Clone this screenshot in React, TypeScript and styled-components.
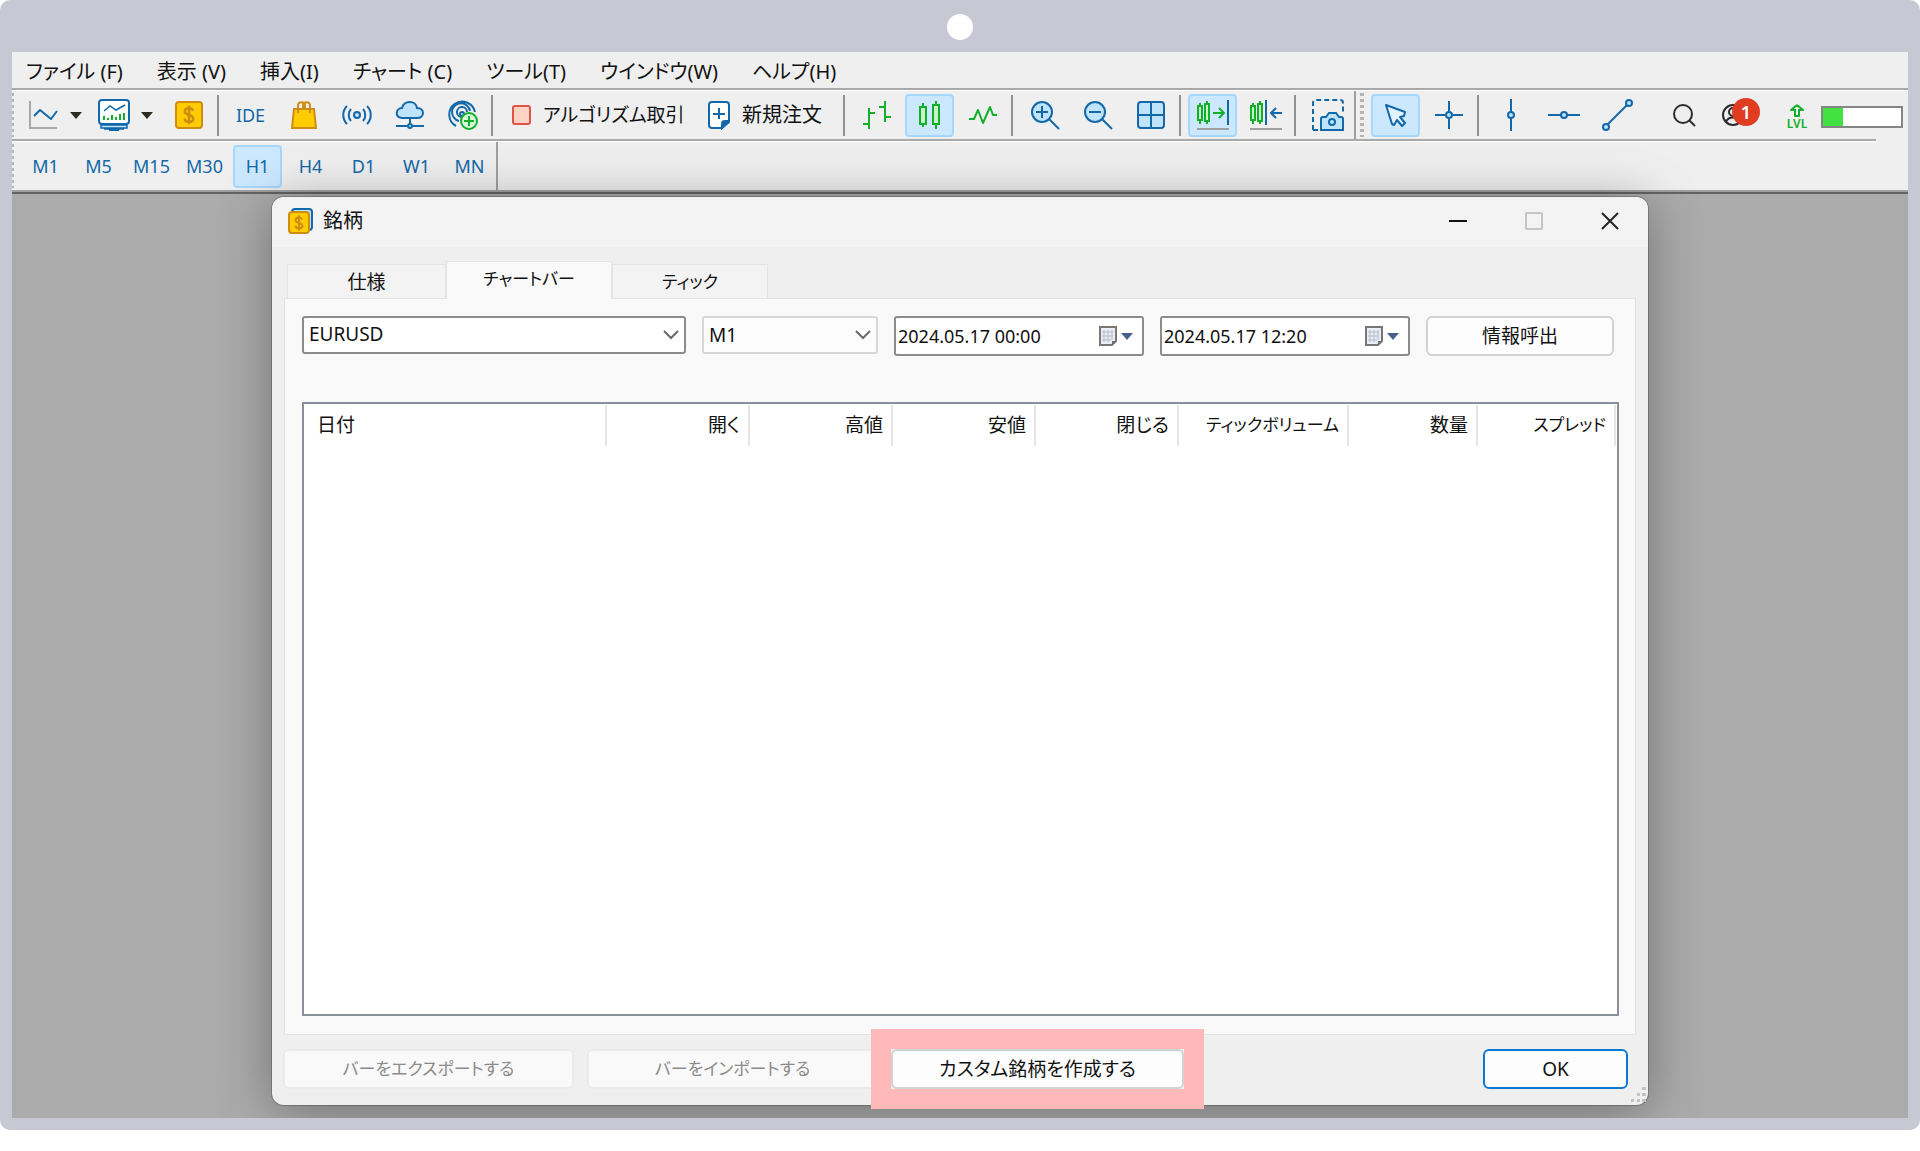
import React from 'react';
import styled, { createGlobalStyle, css } from 'styled-components';

const blue = '#1268a8';
const paleBlue = '#bfe3fb';
const green = '#12b02a';
const paleGreen = '#c9f5cb';
const gold = '#ffcc00';
const darkGold = '#cf8c12';

const GlobalStyle = createGlobalStyle`
  *, *::before, *::after { box-sizing: border-box; }
  body { margin: 0; background: #fff; }
  body, button, input, select, table {
    font-family: "Noto Sans", "Noto Sans CJK JP", sans-serif;
    font-size: 19px;
    line-height: 24px;
    color: #111;
    font-feature-settings: "palt";
  }
  button { padding: 0; border: 0; background: none; }
  svg { display: block; flex: none; }
`;

const Frame = styled.div`
  background: #c8c8d5;
  border-radius: 10px;
  padding: 0 12px 12px;
`;

const CameraBar = styled.div`
  height: 52px;
  padding-top: 14px;
  display: flex;
  justify-content: center;
  align-items: flex-start;
`;

const CameraDot = styled.span`
  width: 26px;
  height: 26px;
  border-radius: 50%;
  background: #fff;
`;

const Screen = styled.div`
  background: #efefef;
  overflow: hidden;
`;

const MenuBar = styled.nav`
  height: 36px;
  display: flex;
  align-items: center;
  gap: 34px;
  padding: 3px 0 0 14px;
`;

const MenuItem = styled.button`
  font-size: 20px;
  white-space: nowrap;
`;

const Divider = styled.div<{ $inset?: boolean }>`
  height: 3px;
  border-top: 2px solid #a9a9a9;
  background: #fff;
  margin-right: ${p => (p.$inset ? '32px' : '0')};
`;

const Toolbar = styled.div`
  height: 48px;
  display: flex;
  align-items: center;
  gap: 4px;
`;

const Grip = styled.span<{ $bold?: boolean }>`
  flex: none;
  width: ${p => (p.$bold ? '4px' : '2px')};
  height: 44px;
  background: repeating-linear-gradient(#b5b5b5 0 3px, transparent 3px 6px);
  margin-right: ${p => (p.$bold ? '3px' : '4px')};
`;

const Separator = styled.span`
  flex: none;
  width: 2px;
  height: 41px;
  background: #929292;
  margin-right: 3px;
`;

const EdgeSeparator = styled.span`
  flex: none;
  width: 2px;
  height: 48px;
  margin-left: -2px;
  background: #a0a0a0;
`;

const Tool = styled.button<{ $active?: boolean }>`
  flex: none;
  width: 49px;
  height: 43px;
  border-radius: 4px;
  display: flex;
  align-items: center;
  justify-content: center;
  font-size: 18px;
  color: ${blue};
  ${p => p.$active && css`
    background: #cce8ff;
    border: 2px solid #a6d8ff;
  `}
`;

const SplitTool = styled.button`
  flex: none;
  width: 67px;
  height: 43px;
  padding-left: 5px;
  display: flex;
  align-items: center;
  gap: 11px;
`;

const TextTool = styled.button<{ $width: number; $dense?: boolean }>`
  flex: none;
  width: ${p => p.$width}px;
  height: 43px;
  padding-left: 12px;
  display: flex;
  align-items: center;
  gap: 12px;
  font-size: ${p => (p.$dense ? '19px' : '20px')};
  white-space: nowrap;
`;

const StatusGroup = styled.div`
  margin-left: auto;
  padding-right: 5px;
  display: flex;
  align-items: center;
  gap: 26px;
`;

const AccountButton = styled.button`
  position: relative;
  width: 38px;
  height: 30px;
`;

const Badge = styled.span`
  position: absolute;
  right: 0;
  top: -2px;
  width: 28px;
  height: 28px;
  border-radius: 50%;
  background: #e03c22;
  color: #fff;
  font-size: 18px;
  line-height: 28px;
  font-weight: 600;
  text-align: center;
`;

const LevelGroup = styled.div`
  display: flex;
  align-items: center;
  gap: 13px;
  padding-top: 3px;
`;

const Level = styled.span`
  width: 22px;
  display: flex;
  flex-direction: column;
  align-items: center;
  font-size: 12px;
  line-height: 14px;
  color: ${green};
  font-weight: 600;
`;

const Meter = styled.div`
  width: 82px;
  height: 22px;
  border: 2px solid #858585;
  background: linear-gradient(90deg, #42e142 0 20px, #fff 20px);
`;

const Timeframes = styled(Toolbar)`
  padding-right: 10px;
`;

const TimeframeList = styled.div`
  display: flex;
  gap: 4px;
  margin-left: -1px;
`;

const WorkspaceEdge = styled.div`
  height: 4px;
  background: #636363;
  border-top: 2px solid #a0a0a0;
`;

const Workspace = styled.main`
  background: #ababab;
  padding: 3px 260px 13px;
`;

const Dialog = styled.section`
  position: relative;
  background: #efefef;
  border-radius: 12px;
  box-shadow: 0 0 0 1px rgba(0, 0, 0, 0.2), 0 6px 52px rgba(0, 0, 0, 0.34);
`;

const TitleBar = styled.header`
  height: 50px;
  padding: 0 0 2px 15px;
  display: flex;
  align-items: center;
  gap: 10px;
  background: #f3f3f3;
  border-radius: 12px 12px 0 0;
`;

const Title = styled.h1`
  margin: 0;
  font-size: 20px;
  line-height: 24px;
  font-weight: 400;
`;

const WindowButtons = styled.div`
  margin-left: auto;
  display: flex;
`;

const WindowButton = styled.button`
  width: 76px;
  height: 48px;
  display: flex;
  align-items: center;
  justify-content: center;
`;

const DialogBody = styled.div`
  padding: 14px 12px 0;
`;

const TabList = styled.div`
  height: 37px;
  padding-left: 3px;
  display: flex;
  align-items: flex-end;
`;

const Tab = styled.button<{ $width: number; $active?: boolean; $dense?: boolean }>`
  width: ${p => p.$width}px;
  height: 34px;
  font-size: ${p => (p.$dense ? '17px' : '19px')};
  border: 1px solid #e4e4e4;
  border-bottom: 0;
  background: #f3f3f3;
  ${p => p.$active && css`
    height: 38px;
    margin-bottom: -1px;
    padding-bottom: 4px;
    background: #f9f9f9;
    position: relative;
  `}
`;

const Panel = styled.div`
  background: #f9f9f9;
  border: 1px solid #e2e2e2;
  padding: 17px 16px 18px 17px;
`;

const Controls = styled.form`
  display: flex;
  align-items: flex-start;
  gap: 16px;
  height: 40px;
  margin-bottom: 46px;
`;

const SelectBox = styled.span<{ $width: number }>`
  width: ${p => p.$width}px;
  display: grid;
  align-items: center;

  > * { grid-area: 1 / 1; }
  > svg { justify-self: end; margin-right: 7px; pointer-events: none; }
`;

const Select = styled.select<{ $muted?: boolean }>`
  appearance: none;
  width: 100%;
  height: 38px;
  padding: 0 30px ${p => (p.$muted ? '0' : '2px')} 5px;
  border: 2px solid ${p => (p.$muted ? '#d6d6d6' : '#8c8c8c')};
  border-radius: 3px;
  background: ${p => (p.$muted ? '#fcfcfc' : '#fff')};
`;

const DateBox = styled.span`
  width: 250px;
  height: 40px;
  display: flex;
  align-items: center;
  border: 2px solid #8c8c8c;
  border-radius: 3px;
  background: #fff;
  padding-right: 9px;
`;

const DateInput = styled.input`
  flex: 1;
  min-width: 0;
  border: 0;
  padding: 0 0 0 2px;
  background: none;
  font-size: 18px;
  outline: 0;
`;

const CalendarButton = styled.button`
  display: flex;
  align-items: center;
  gap: 3px;
`;

const PushButton = styled.button<{ $width: number; $primary?: boolean; $dense?: boolean }>`
  width: ${p => p.$width}px;
  height: 40px;
  font-size: ${p => (p.$dense ? '17px' : '19px')};
  border: 2px solid ${p => (p.$primary ? '#0b78d4' : '#d2d2d2')};
  border-radius: 6px;
  background: #fdfdfd;
  white-space: nowrap;

  &:disabled {
    color: #8b8b8b;
    background: #f9f9f9;
    border-color: #eaeaea;
  }
`;

const TableBox = styled.div`
  height: 614px;
  border: 2px solid #8a9097;
  background: #fff;
  padding: 1px 1px 0 0;
`;

const Table = styled.table`
  width: 100%;
  table-layout: fixed;
  border-collapse: separate;
  border-spacing: 0;
`;

const HeaderCell = styled.th<{ $width?: number; $dense?: boolean }>`
  width: ${p => (p.$width ? `${p.$width}px` : 'auto')};
  height: 41px;
  padding: 0 8px 2px;
  border-right: 2px solid #e5e5e5;
  font-size: ${p => (p.$dense ? '17px' : '19px')};
  font-weight: 400;
  text-align: right;
  white-space: nowrap;

  &:first-child { text-align: left; padding-left: 13px; }
`;

const Footer = styled.footer`
  height: 70px;
  padding: 14px 20px 0 11px;
  display: flex;
  align-items: flex-start;
  gap: 13px;
`;

const Highlight = styled.span`
  position: relative;
  z-index: 1;
  display: flex;
  background: #efefef;
  box-shadow: 0 0 0 20px #ffb9b9;
`;

const OkSlot = styled.span`
  margin-left: auto;
  display: flex;
`;

const ResizeGrip = styled.svg`
  position: absolute;
  right: 2px;
  bottom: 3px;
`;

type IconProps = { w?: number; h?: number; children: React.ReactNode; stroke?: string; sw?: number };

const Icon = ({ w = 32, h = 32, children, stroke = blue, sw = 2 }: IconProps) => (
  <svg width={w} height={h} viewBox={`0 0 ${w} ${h}`} fill="none" stroke={stroke} strokeWidth={sw} aria-hidden="true">
    {children}
  </svg>
);

const Caret = ({ color = '#2b2b22' }: { color?: string }) => (
  <svg width="12" height="7" viewBox="0 0 12 7" aria-hidden="true"><path d="M0 0h12L6 7z" fill={color} /></svg>
);

const LineChartIcon = () => (
  <Icon>
    <path d="M3 2v27h27" stroke="#a8a8a8" />
    <path d="M7 16l6-6 11 9 6-8" strokeLinejoin="round" transform="translate(0 1)" />
  </Icon>
);

const ChartWindowIcon = () => (
  <Icon>
    <rect x="1" y="1" width="30" height="24" rx="3" fill="#fff" />
    <path d="M6 12l6-5 6 4 9-5" strokeWidth="1.5" />
    <path d="M6 21v-4M10 21v-2M14 21v-5M18 21v-3M22 21v-6M26 21v-7" stroke={green} />
    <path d="M3 26h26v3H3zM6 30h20" fill={paleBlue} strokeWidth="1.5" />
    <path d="M11 31h10" />
  </Icon>
);

const DollarShape = ({ scale = 1 }: { scale?: number }) => (
  <g transform={`scale(${scale})`} stroke={darkGold} strokeWidth="3">
    <path d="M5-5C4-7 2-8 0-8c-3 0-5 1-5 4 0 5 10 3 10 8 0 3-2 4-5 4-3 0-5-1-5-4M0-11v22" />
  </g>
);

const DollarIcon = () => (
  <Icon w={30} h={30}>
    <rect x="2" y="2" width="26" height="26" rx="3" fill={gold} stroke={darkGold} />
    <g transform="translate(15 15)"><DollarShape scale={0.85} /></g>
  </Icon>
);

const SymbolsIcon = () => (
  <Icon w={26} h={28}>
    <rect x="5" y="2" width="20" height="21" rx="3" fill={paleBlue} />
    <rect x="2" y="5" width="20" height="21" rx="3" fill={gold} stroke={darkGold} />
    <g transform="translate(12 16)"><DollarShape scale={0.68} /></g>
  </Icon>
);

const BagIcon = () => (
  <Icon w={28} h={30} stroke={darkGold} sw={2}>
    <path d="M4 9h20l2 19H2z" fill={gold} />
    <path d="M8 13V6c0-5 7-5 7 0v4M13 10V6c0-5 7-5 7 0v7" />
  </Icon>
);

const SignalIcon = () => (
  <Icon w={30} h={24}>
    <circle cx="15" cy="12" r="3" fill={paleBlue} />
    <path d="M9 6c-3 3-3 9 0 12M21 6c3 3 3 9 0 12M5 3c-5 5-5 13 0 18M25 3c5 5 5 13 0 18" />
  </Icon>
);

const CloudIcon = () => (
  <Icon w={30} h={28}>
    <path d="M7 17c-8-1-6-10 0-10 2-8 14-8 15 0 8 0 8 10 0 10z" fill={paleBlue} />
    <path d="M15 17v6M1 25h11M18 25h11" />
    <circle cx="15" cy="25" r="2" fill={paleBlue} />
  </Icon>
);

const PodcastIcon = () => (
  <Icon>
    <path d="M9 27A13 13 0 1 1 28 13M12 22a9 9 0 1 1 11-10M14 18a5 5 0 1 1 6-5" />
    <circle cx="15" cy="15" r="2" fill={paleBlue} />
    <circle cx="22" cy="22" r="8" fill="#d8f8d8" stroke={green} />
    <path d="M22 17v10M17 22h10" stroke={green} />
  </Icon>
);

const StopIcon = () => (
  <Icon w={19} h={20} stroke="#dd5546">
    <rect x="1" y="1" width="17" height="18" rx="2" fill="#ffd2c6" />
  </Icon>
);

const NewOrderIcon = () => (
  <Icon w={22} h={30}>
    <path d="M4 2h14q3 0 3 3v17l-7 6H4q-3 0-3-3V5q0-3 3-3z" fill="#fff" />
    <path d="M21 21h-4q-3 0-3 3v4z" fill={blue} />
    <path d="M11 8v11M5 14h12" />
  </Icon>
);

const BarsIcon = () => (
  <Icon w={30} h={30} stroke={green}>
    <path d="M7 8v21M7 13h6M1 24h6M23 1v21M17 7h6M23 17h6" />
  </Icon>
);

const CandlesIcon = () => (
  <Icon w={24} h={30} stroke={green}>
    <path d="M5 3v4M5 23v4M18 1v4M18 24v5" />
    <rect x="2" y="7" width="6" height="17" fill={paleGreen} />
    <rect x="15" y="5" width="6" height="19" fill={paleGreen} />
  </Icon>
);

const WaveIcon = () => (
  <Icon w={30} h={22} stroke={green}>
    <path d="M1 15h5l4-9 5 13 7-16 3 8h4" strokeLinejoin="round" />
  </Icon>
);

const MagnifierIcon = ({ plus }: { plus?: boolean }) => (
  <Icon w={30} h={30}>
    <circle cx="12" cy="12" r="10" fill={paleBlue} />
    <path d={plus ? 'M12 6v12M6 12h12' : 'M6 12h12'} />
    <path d="M19 19l10 10" />
  </Icon>
);

const GridIcon = () => (
  <Icon w={30} h={30}>
    <rect x="2" y="2" width="26" height="26" rx="3" fill={paleBlue} />
    <path d="M15 2v26M2 15h26" />
  </Icon>
);

const MiniCandles = () => (
  <g stroke={green}>
    <path d="M3 4v3M3 21v4M10 2v3M10 22v3" />
    <rect x="1" y="7" width="4" height="14" fill={paleGreen} />
    <rect x="8" y="5" width="4" height="17" fill={paleGreen} />
  </g>
);

const AutoScrollIcon = () => (
  <Icon>
    <MiniCandles />
    <path d="M16 14h11M22 9l5 5-5 5" stroke={green} />
    <path d="M31 1v25" />
    <path d="M0 30h32" stroke="#a0a0a0" />
  </Icon>
);

const ShiftIcon = () => (
  <Icon>
    <MiniCandles />
    <path d="M16 1v25M21 14h11M26 9l-5 5 5 5" />
    <path d="M0 30h32" stroke="#a0a0a0" />
  </Icon>
);

const SnapshotIcon = () => (
  <Icon>
    <path d="M1 31V4q0-3 3-3h24q3 0 3 3v10M1 31h6" strokeDasharray="5 3" />
    <path d="M9 20q0-2 2-2h3l3-4h7l3 4h2q2 0 2 2v11H9z" fill={paleBlue} />
    <circle cx="20" cy="23" r="3" />
  </Icon>
);

const CursorIcon = () => (
  <Icon w={24} h={26}>
    <path d="M2 3l19 7-1 4-4 1 5 6-3 3-5-6-3 5-2-1z" fill="#e3f3ff" strokeLinejoin="round" />
  </Icon>
);

const CrosshairIcon = () => (
  <Icon w={30} h={30}>
    <path d="M15 1v10M15 19v10M1 15h10M19 15h10" />
    <circle cx="15" cy="15" r="3" fill={paleBlue} />
  </Icon>
);

const VerticalIcon = () => (
  <Icon w={12} h={32}>
    <path d="M6 0v32" /><circle cx="6" cy="16" r="3" fill={paleBlue} />
  </Icon>
);

const HorizontalIcon = () => (
  <Icon w={32} h={12}>
    <path d="M0 6h32" /><circle cx="16" cy="6" r="3" fill={paleBlue} />
  </Icon>
);

const TrendIcon = () => (
  <Icon>
    <path d="M5 27L27 5" />
    <circle cx="5" cy="28" r="3" fill={paleBlue} /><circle cx="28" cy="4" r="3" fill={paleBlue} />
  </Icon>
);

const SearchIcon = () => (
  <Icon w={24} h={24} stroke="#2b2b2b">
    <circle cx="11" cy="11" r="9" /><path d="M17 17l6 6" />
  </Icon>
);

const AccountIcon = () => (
  <Icon w={24} h={30} stroke="#2b2b2b">
    <circle cx="11" cy="15" r="10" /><circle cx="11" cy="12" r="4" />
    <path d="M4 22c2-6 12-6 14 0" />
  </Icon>
);

const LevelIcon = () => (
  <Icon w={16} h={14} stroke={green}>
    <path d="M8 2l6 5h-3v-1M8 2L2 7h3M6 6v7h4V6" strokeLinejoin="round" />
  </Icon>
);

const CalendarIcon = () => (
  <Icon w={20} h={22}>
    <path d="M2 2h16v14l-4 4H2z" fill="#e9edf4" stroke="#7d7572" />
    <path d="M4 7h11M4 11h11M4 15h9M6 5v12M10 5v12M14 5v10" stroke="#b4bccb" strokeWidth="1" />
    <path d="M18 16h-4v4z" fill="#6f6f78" stroke="none" />
  </Icon>
);

const Chevron = () => (
  <Icon w={16} h={10} stroke="#6a6a6a"><path d="M1 1l7 7 7-7" /></Icon>
);

const menus = ['ファイル (F)', '表示 (V)', '挿入(I)', 'チャート (C)', 'ツール(T)', 'ウインドウ(W)', 'ヘルプ(H)'];
const timeframes = ['M1', 'M5', 'M15', 'M30', 'H1', 'H4', 'D1', 'W1', 'MN'];
const columns: { label: string; width?: number; dense?: boolean }[] = [
  { label: '日付' },
  { label: '開く', width: 143 },
  { label: '高値', width: 143 },
  { label: '安値', width: 143 },
  { label: '閉じる', width: 143 },
  { label: 'ティックボリューム', width: 170, dense: true },
  { label: '数量', width: 129 },
  { label: 'スプレッド', width: 138, dense: true },
];

const DateField = ({ label, value }: { label: string; value: string }) => (
  <DateBox>
    <DateInput aria-label={label} defaultValue={value} />
    <CalendarButton type="button" aria-label={label}>
      <CalendarIcon />
      <Caret color="#45618c" />
    </CalendarButton>
  </DateBox>
);

export default function App() {
  return (
    <>
      <GlobalStyle />
      <Frame>
        <CameraBar><CameraDot /></CameraBar>
        <Screen>
          <MenuBar>
            {menus.map(m => <MenuItem key={m}>{m}</MenuItem>)}
          </MenuBar>
          <Divider />
          <Toolbar>
            <Grip />
            <SplitTool aria-label="Line chart"><LineChartIcon /><Caret /></SplitTool>
            <SplitTool aria-label="Chart window"><ChartWindowIcon /><Caret /></SplitTool>
            <Tool aria-label="Symbols"><DollarIcon /></Tool>
            <Separator />
            <Tool>IDE</Tool>
            <Tool aria-label="Market"><BagIcon /></Tool>
            <Tool aria-label="Signals"><SignalIcon /></Tool>
            <Tool aria-label="Cloud"><CloudIcon /></Tool>
            <Tool aria-label="VPS"><PodcastIcon /></Tool>
            <Separator />
            <TextTool $width={192} $dense><StopIcon />アルゴリズム取引</TextTool>
            <TextTool $width={143}><NewOrderIcon />新規注文</TextTool>
            <Separator />
            <Tool aria-label="Bars"><BarsIcon /></Tool>
            <Tool aria-label="Candles" $active><CandlesIcon /></Tool>
            <Tool aria-label="Line"><WaveIcon /></Tool>
            <Separator />
            <Tool aria-label="Zoom in"><MagnifierIcon plus /></Tool>
            <Tool aria-label="Zoom out"><MagnifierIcon /></Tool>
            <Tool aria-label="Tile"><GridIcon /></Tool>
            <Separator />
            <Tool aria-label="Auto scroll" $active><AutoScrollIcon /></Tool>
            <Tool aria-label="Shift"><ShiftIcon /></Tool>
            <Separator />
            <Tool aria-label="Snapshot"><SnapshotIcon /></Tool>
            <EdgeSeparator />
            <Grip $bold />
            <Tool aria-label="Cursor" $active><CursorIcon /></Tool>
            <Tool aria-label="Crosshair"><CrosshairIcon /></Tool>
            <Separator />
            <Tool aria-label="Vertical line"><VerticalIcon /></Tool>
            <Tool aria-label="Horizontal line"><HorizontalIcon /></Tool>
            <Tool aria-label="Trend line"><TrendIcon /></Tool>
            <StatusGroup>
              <button aria-label="Search"><SearchIcon /></button>
              <AccountButton aria-label="Account"><AccountIcon /><Badge>1</Badge></AccountButton>
              <LevelGroup>
                <Level><LevelIcon />LVL</Level>
                <Meter />
              </LevelGroup>
            </StatusGroup>
          </Toolbar>
          <Divider $inset />
          <Timeframes>
            <Grip />
            <TimeframeList>
              {timeframes.map(t => <Tool key={t} $active={t === 'H1'}>{t}</Tool>)}
            </TimeframeList>
            <EdgeSeparator />
          </Timeframes>
          <WorkspaceEdge />
          <Workspace>
            <Dialog>
              <TitleBar>
                <SymbolsIcon />
                <Title>銘柄</Title>
                <WindowButtons>
                  <WindowButton aria-label="Minimize"><Icon w={18} h={18} stroke="#111"><path d="M0 9h18" /></Icon></WindowButton>
                  <WindowButton aria-label="Maximize" disabled><Icon w={18} h={18} stroke="#c4c4c4"><rect x="1" y="1" width="16" height="16" rx="1" /></Icon></WindowButton>
                  <WindowButton aria-label="Close"><Icon w={18} h={18} stroke="#222"><path d="M1 1l16 16M17 1L1 17" /></Icon></WindowButton>
                </WindowButtons>
              </TitleBar>
              <DialogBody>
                <TabList role="tablist">
                  <Tab role="tab" $width={159}>仕様</Tab>
                  <Tab role="tab" $width={166} $active $dense aria-selected>チャートバー</Tab>
                  <Tab role="tab" $width={156} $dense>ティック</Tab>
                </TabList>
                <Panel role="tabpanel">
                  <Controls onSubmit={e => e.preventDefault()}>
                    <SelectBox $width={384}>
                      <Select aria-label="銘柄"><option>EURUSD</option></Select>
                      <Chevron />
                    </SelectBox>
                    <SelectBox $width={176}>
                      <Select aria-label="Timeframe" $muted><option>M1</option></Select>
                      <Chevron />
                    </SelectBox>
                    <DateField label="From" value="2024.05.17 00:00" />
                    <DateField label="To" value="2024.05.17 12:20" />
                    <PushButton $width={188}>情報呼出</PushButton>
                  </Controls>
                  <TableBox>
                    <Table>
                      <thead>
                        <tr>
                          {columns.map(c => (
                            <HeaderCell key={c.label} scope="col" $width={c.width} $dense={c.dense}>{c.label}</HeaderCell>
                          ))}
                        </tr>
                      </thead>
                      <tbody />
                    </Table>
                  </TableBox>
                </Panel>
              </DialogBody>
              <Footer>
                <PushButton $width={291} $dense disabled>バーをエクスポートする</PushButton>
                <PushButton $width={291} $dense disabled>バーをインポートする</PushButton>
                <Highlight><PushButton $width={293}>カスタム銘柄を作成する</PushButton></Highlight>
                <OkSlot><PushButton $width={145} $primary>OK</PushButton></OkSlot>
              </Footer>
              <ResizeGrip width="15" height="15" viewBox="0 0 15 15" fill="#c2c2c2" aria-hidden="true">
                <path d="M11 0h4v3h-4zM6 6h3v3H6zM11 6h4v3h-4zM0 12h3v3H0zM6 12h3v3H6zM11 12h4v3h-4z" />
              </ResizeGrip>
            </Dialog>
          </Workspace>
        </Screen>
      </Frame>
    </>
  );
}
